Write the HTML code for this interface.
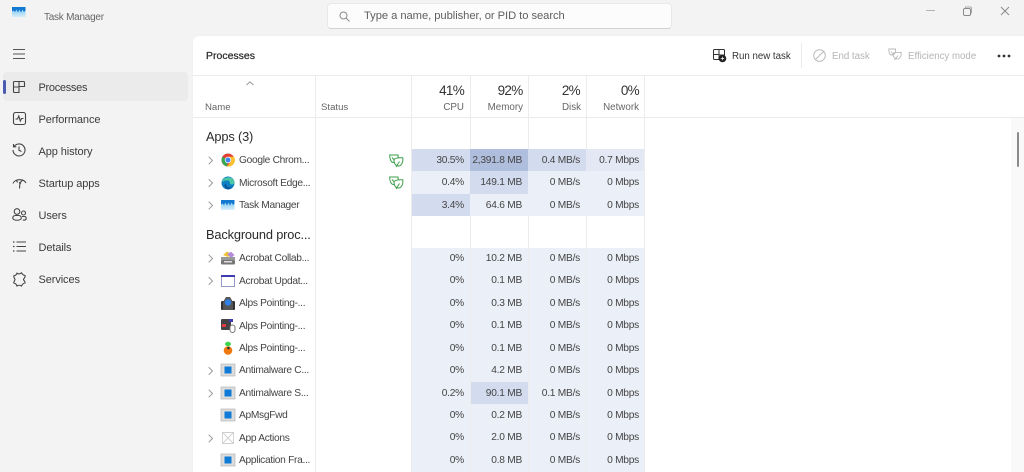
<!DOCTYPE html>
<html><head><meta charset="utf-8">
<style>
html,body{margin:0;padding:0;width:1024px;height:472px;overflow:hidden;background:#f3f3f3}
body{font-family:"Liberation Sans",sans-serif;position:relative;color:#333;filter:blur(.3px)}
.a{position:absolute;white-space:nowrap}
.nav{left:38.500px;font-size:11px;letter-spacing:-.1px;line-height:16px;color:#3c3c3c;margin-top:.5px}
.h{background:#ebebeb}
.n{left:239px;font-size:10.200px;letter-spacing:-.3px;line-height:14px;color:#444;margin-top:1px}
.g{left:206px;font-size:12.800px;letter-spacing:-.15px;line-height:16px;color:#2b2b2b;margin-top:.5px}
.c{position:absolute;height:22.400px;line-height:23.800px;font-size:10.200px;letter-spacing:-.25px;text-align:right;color:#444;box-sizing:border-box;padding-right:6px;white-space:nowrap}
.c1{left:412px;width:58px}.c2{left:470px;width:58px}.c3{left:528px;width:58px}.c4{left:586px;width:58px;padding-right:5px}
.l{background:#ebeff7}.m{background:#d3dbee}.d{background:#b0bedd}
.v{position:absolute;width:1px;top:76px;height:396px;background:#ececec}
svg{position:absolute;overflow:visible}
.i{fill:none;stroke:#444;stroke-width:1.100}
.t{font-size:13.500px;letter-spacing:-.7px;color:#333;text-align:right;line-height:18px;margin-top:.5px}
.s{font-size:9.800px;color:#666;text-align:right;line-height:14px}
.ch{fill:none;stroke:#999;stroke-width:1}
.tb{font-size:9.700px;line-height:15px;top:49px}
.hd{font-size:9.600px;line-height:14px;color:#666;top:101px}
</style></head><body>

<!-- title bar -->
<svg style="left:12px;top:7px" width="14" height="11"><defs><linearGradient id="tm" x1="0" y1="0" x2="0" y2="1"><stop offset="0" stop-color="#6cc0f0"/><stop offset="1" stop-color="#d8eefa"/></linearGradient></defs><rect width="13.500" height="10" fill="url(#tm)"/><path d="M0 0H13.500V3.500L12 5 10.500 2.500 9 5.500 7.500 2.500 6 5.500 4.500 2.500 3 5 1.500 3.500 0 4.500Z" fill="#1278d0"/></svg>
<div class="a" style="left:44px;top:10px;font-size:10px;letter-spacing:-.25px;line-height:14px;color:#666;margin-top:.5px">Task Manager</div>
<div class="a" style="left:327px;top:3px;width:345px;height:26px;box-sizing:border-box;background:#fcfcfc;border:1px solid #e8e8e8;border-bottom-color:#d2d2d2;border-radius:4px"></div>
<svg style="left:339px;top:11px" width="11" height="11"><circle cx="4.500" cy="4.500" r="3.500" fill="none" stroke="#8a8a8a" stroke-width="1"/><path d="M7 7L10.500 10.500" stroke="#8a8a8a" stroke-width="1"/></svg>
<div class="a" style="left:364px;top:9px;font-size:11.200px;letter-spacing:-.05px;line-height:15px;color:#5f5f5f">Type a name, publisher, or PID to search</div>
<svg style="left:926px;top:6px" width="90" height="12"><path d="M0 4.500H9" stroke="#b5b5b5"/><rect x="37.500" y="2.500" width="7" height="7" rx="1.500" fill="none" stroke="#8a8a8a"/><path d="M39.500 2V1H44.500Q45.500 1 45.500 2V7.500" fill="none" stroke="#aaa"/><path d="M75 1L83 9M83 1L75 9" stroke="#8a8a8a"/></svg>

<!-- sidebar -->
<svg style="left:13px;top:49px" width="12" height="10"><path d="M0 .5H12M0 5H12M0 9.500H12" stroke="#555" stroke-width="1.100"/></svg>
<div class="a h" style="left:3px;top:72px;width:185px;height:29px;border-radius:4px"></div>
<div class="a" style="left:3px;top:80px;width:3px;height:14px;background:#4a5bb0;border-radius:2px"></div>
<svg style="left:13px;top:81px" width="12" height="12"><path class="i" d="M1.500 .5H10.500Q11.500 .5 11.500 1.500V5.500H6V11.500H1.500Q.5 11.500 .5 10.500V1.500Q.5 .5 1.500 .5ZM.5 6H6M6 .5V6" /></svg>
<div class="a nav" style="top:79px;letter-spacing:-.3px">Processes</div>
<svg style="left:13px;top:112px" width="13" height="13"><rect class="i" x=".5" y=".5" width="12" height="12" rx="2"/><path class="i" d="M2.500 7H4.500L5.800 4 7.300 9 8.500 6.500H10.500"/></svg>
<div class="a nav" style="top:111px">Performance</div>
<svg style="left:12px;top:143px" width="14" height="14"><path class="i" d="M2.100 3.500A6 6 0 1 1 1 7M1.500 1V3.800H4.300M7 3.500V7.300L9.500 8.500"/></svg>
<div class="a nav" style="top:143px">App history</div>
<svg style="left:12px;top:177px" width="15" height="13"><path class="i" d="M1 6.500C2.500 2 11.500 1 14 6M7.500 11.500L8 5.500 10.500 3.500M7 5.500L9 6.500M4.500 3.500L5.500 5.500"/></svg>
<div class="a nav" style="top:175px">Startup apps</div>
<svg style="left:12px;top:208px" width="15" height="14"><circle class="i" cx="5" cy="3.500" r="2.800"/><circle class="i" cx="11.500" cy="5" r="2"/><path class="i" d="M.8 10C.8 8 2 7.500 3.500 7.500H6.500C8 7.500 9.300 8 9.300 10 9.300 13 .8 13 .8 10ZM10 8.500H12.500C13.500 8.500 14.200 9 14.200 10.500 14.200 12 12.500 12.300 10.800 12"/></svg>
<div class="a nav" style="top:207px">Users</div>
<svg style="left:13px;top:241px" width="13" height="11"><path d="M3.500 1H13M3.500 5.500H13M3.500 10H13" stroke="#444" stroke-width="1.100"/><path d="M0 1H1.500M0 5.500H1.500M0 10H1.500" stroke="#444" stroke-width="1.300"/></svg>
<div class="a nav" style="top:239px">Details</div>
<svg style="left:13px;top:272px" width="13" height="15"><path class="i" d="M4 1.200C6 2.800 8 1.200 8.500 .8 9 1.800 9.500 3 12 3.500 12.800 5.500 10.500 6.500 10.500 7.500 10.500 8.500 12.500 9.500 12 11 9.500 11.500 9 13 8.500 14 7 13 5.500 13 4 14 3.500 12 2.500 11.500 .8 11 .5 9.500 2 8.500 2 7.500 2 6.500 .3 5.500 .8 3.800 2.500 3.500 3.500 2.800 4 1.200Z"/></svg>
<div class="a nav" style="top:271px">Services</div>

<!-- main panel -->
<div class="a" style="left:193px;top:36px;width:831px;height:436px;background:#fff;border-top-left-radius:6px;box-shadow:0 0 1px #ddd"></div>
<div class="a" style="left:206px;top:49px;font-size:10.500px;line-height:15px;color:#2c2c2c;-webkit-text-stroke:.25px #2c2c2c">Processes</div>

<svg style="left:713px;top:49px" width="14" height="14"><path d="M1.500 .5H10.500Q11.500 .5 11.500 1.500V6H6V10.500H1.500Q.5 10.500 .5 9.500V1.500Q.5 .5 1.500 .5ZM.5 5.500H6M6 .5V6" fill="none" stroke="#333" stroke-width="1"/><circle cx="9.500" cy="9.500" r="3.800" fill="#222"/><path d="M7.800 9.500H11.200M9.500 7.800V11.200" stroke="#fff" stroke-width=".7"/></svg>
<div class="a tb" style="left:732px;color:#333">Run new task</div>
<div class="a" style="left:801px;top:43px;width:1px;height:25px;background:#ececec"></div>
<svg style="left:813px;top:49px" width="13" height="13"><circle cx="6.500" cy="6.500" r="5.800" fill="none" stroke="#bbb" stroke-width="1"/><path d="M2.500 10.500L10.500 2.500" stroke="#bbb"/></svg>
<div class="a tb" style="left:832px;color:#b5b5b5">End task</div>
<svg style="left:888px;top:48px" width="14" height="14"><path d="M.8 1H7.500C8 3 7 7 3.500 7 1.500 7 .8 4 .8 1ZM5 5.500C6 4.500 9 4 13.200 4.500 13.500 8 12 11 9 11 6.500 11 5 8.500 5 5.500ZM6.500 12L10 7.500M3 3.500L6 7" fill="none" stroke="#b8b8b8" stroke-width=".9"/></svg>
<div class="a tb" style="left:908px;color:#b5b5b5">Efficiency mode</div>
<svg style="left:997px;top:53.500px" width="14" height="4"><circle cx="2" cy="2" r="1.400" fill="#333"/><circle cx="7" cy="2" r="1.400" fill="#333"/><circle cx="12" cy="2" r="1.400" fill="#333"/></svg>

<div class="a" style="left:193px;top:75px;width:831px;height:1px;background:#ebebeb"></div>
<div class="a" style="left:193px;top:117px;width:831px;height:1px;background:#ebebeb"></div>
<div class="a" style="left:1011px;top:118px;width:13px;height:354px;background:#f9f9f9"></div>
<div class="a" style="left:1016.500px;top:132px;width:2.500px;height:35px;background:#8a8a8a;border-radius:2px"></div>

<svg style="left:246px;top:81px" width="8" height="5"><path d="M.5 4L4 .8 7.500 4" fill="none" stroke="#999"/></svg>
<div class="a hd" style="left:205px">Name</div>
<div class="a hd" style="left:321px">Status</div>
<div class="a t" style="left:412px;width:52px;top:81px">41%</div><div class="a s" style="left:412px;width:52px;top:101px">CPU</div>
<div class="a t" style="left:471px;width:51.500px;top:81px">92%</div><div class="a s" style="left:471px;width:52px;top:101px">Memory</div>
<div class="a t" style="left:529px;width:51px;top:81px">2%</div><div class="a s" style="left:529px;width:52px;top:101px">Disk</div>
<div class="a t" style="left:587px;width:52px;top:81px">0%</div><div class="a s" style="left:587px;width:52px;top:101px">Network</div>

<div class="a g" style="top:128px">Apps (3)</div>
<div class="a g" style="top:226px">Background proc...</div>

<!-- background fills -->
<div class="a l" style="left:412px;top:247.500px;width:232px;height:225px"></div>
<div class="a m" style="left:470px;top:382px;width:58px;height:22.400px"></div>

<div class="v" style="left:315px"></div><div class="v" style="left:411px"></div><div class="v" style="left:470px"></div><div class="v" style="left:528px"></div><div class="v" style="left:586px"></div><div class="v" style="left:644px"></div>

<!-- apps rows -->
<div class="c c1 m" style="top:149px">30.5%</div><div class="c c2 d" style="top:149px">2,391.8 MB</div><div class="c c3 m" style="top:149px">0.4 MB/s</div><div class="c c4 l" style="top:149px;background:#e3e8f4">0.7 Mbps</div>
<div class="c c1 l" style="top:171.400px">0.4%</div><div class="c c2 m" style="top:171.400px">149.1 MB</div><div class="c c3 l" style="top:171.400px">0 MB/s</div><div class="c c4 l" style="top:171.400px">0 Mbps</div>
<div class="c c1 m" style="top:193.800px">3.4%</div><div class="c c2 l" style="top:193.800px">64.6 MB</div><div class="c c3 l" style="top:193.800px">0 MB/s</div><div class="c c4 l" style="top:193.800px">0 Mbps</div>

<!-- background rows -->
<div class="c c1" style="top:247px">0%</div><div class="c c2" style="top:247px">10.2 MB</div><div class="c c3" style="top:247px">0 MB/s</div><div class="c c4" style="top:247px">0 Mbps</div>
<div class="c c1" style="top:269.400px">0%</div><div class="c c2" style="top:269.400px">0.1 MB</div><div class="c c3" style="top:269.400px">0 MB/s</div><div class="c c4" style="top:269.400px">0 Mbps</div>
<div class="c c1" style="top:292px">0%</div><div class="c c2" style="top:292px">0.3 MB</div><div class="c c3" style="top:292px">0 MB/s</div><div class="c c4" style="top:292px">0 Mbps</div>
<div class="c c1" style="top:314.400px">0%</div><div class="c c2" style="top:314.400px">0.1 MB</div><div class="c c3" style="top:314.400px">0 MB/s</div><div class="c c4" style="top:314.400px">0 Mbps</div>
<div class="c c1" style="top:336.800px">0%</div><div class="c c2" style="top:336.800px">0.1 MB</div><div class="c c3" style="top:336.800px">0 MB/s</div><div class="c c4" style="top:336.800px">0 Mbps</div>
<div class="c c1" style="top:359.200px">0%</div><div class="c c2" style="top:359.200px">4.2 MB</div><div class="c c3" style="top:359.200px">0 MB/s</div><div class="c c4" style="top:359.200px">0 Mbps</div>
<div class="c c1" style="top:381.600px">0.2%</div><div class="c c2" style="top:381.600px">90.1 MB</div><div class="c c3" style="top:381.600px">0.1 MB/s</div><div class="c c4" style="top:381.600px">0 Mbps</div>
<div class="c c1" style="top:404px">0%</div><div class="c c2" style="top:404px">0.2 MB</div><div class="c c3" style="top:404px">0 MB/s</div><div class="c c4" style="top:404px">0 Mbps</div>
<div class="c c1" style="top:426.400px">0%</div><div class="c c2" style="top:426.400px">2.0 MB</div><div class="c c3" style="top:426.400px">0 MB/s</div><div class="c c4" style="top:426.400px">0 Mbps</div>
<div class="c c1" style="top:449px">0%</div><div class="c c2" style="top:449px">0.8 MB</div><div class="c c3" style="top:449px">0 MB/s</div><div class="c c4" style="top:449px">0 Mbps</div>

<!-- chevrons -->
<svg style="left:208px;top:155.500px" width="6" height="320"><path class="ch" d="M.7 .7L4.500 4.500.7 8.300M.7 23.200L4.500 27 .7 30.800M.7 45.700L4.500 49.500 .7 53.300M.7 98.700L4.500 102.500 .7 106.300M.7 121.200L4.500 125 .7 128.800M.7 211.200L4.500 215 .7 218.800M.7 233.700L4.500 237.500 .7 241.300M.7 278.700L4.500 282.500 .7 286.300"/></svg>

<!-- process icons -->
<svg style="left:221px;top:153px" width="14" height="14" viewBox="0 0 14 14"><circle cx="7" cy="7" r="6.500" fill="#e53f34"/><path d="M7 7L1.400 3.800A6.500 6.500 0 0 0 6 13.400Z" fill="#34a853"/><path d="M7 3.700H13A6.500 6.500 0 0 1 6 13.400L9.800 8.800Z" fill="#fbc02d"/><circle cx="7" cy="7" r="3.200" fill="#fff"/><circle cx="7" cy="7" r="2.500" fill="#4285f4"/></svg>
<svg style="left:221px;top:176px" width="14" height="14" viewBox="0 0 14 14"><circle cx="7" cy="7" r="6.500" fill="#0f7fc4"/><path d="M.8 6C2 1 10 -.5 13 4.500 13.800 6.500 13.500 8.500 11 8.500 7.500 8.500 10 5 7 4.500 4 4 1.500 6 .8 6Z" fill="#4cc7a4"/><path d="M5 8C5 11 8.500 12.500 11.500 11 9 14 4.500 13.800 3.500 10 3.300 9 4 8 5 8Z" fill="#0b4f95"/></svg>
<svg style="left:221px;top:200px" width="14" height="11"><rect width="13.500" height="10" fill="url(#tm)"/><path d="M0 0H13.500V3.500L12 5 10.500 2.500 9 5.500 7.500 2.500 6 5.500 4.500 2.500 3 5 1.500 3.500 0 4.500Z" fill="#1278d0"/></svg>

<svg style="left:221px;top:251px" width="14" height="14"><path d="M2 4L6 .5 10 3 7 6Z" fill="#f2c230"/><path d="M6 3L10 .8 13.500 4 10 7Z" fill="#b48bd8"/><rect y="6" width="14" height="3" fill="#999"/><rect y="9" width="14" height="4.500" rx="1" fill="#777"/><rect x="3" y="10" width="8" height="1.500" fill="#ddd"/></svg>
<svg style="left:221px;top:274px" width="14" height="14"><rect x=".5" y="1.500" width="13" height="11" fill="#fff" stroke="#9a9ac8"/><rect y="1" width="14" height="2" fill="#3c3cb0"/></svg>
<svg style="left:221px;top:296px" width="14" height="14"><rect y="5" width="14" height="9" rx="1" fill="#333"/><path d="M5 1H9L12 6V14H2V6Z" fill="#555"/><circle cx="7" cy="6.500" r="3.200" fill="#2f80e8"/></svg>
<svg style="left:221px;top:318px" width="14" height="15"><rect y="1" width="10" height="11" rx="1" fill="#444"/><rect x="1" y="6" width="4" height="3" fill="#e23a45"/><rect x="8" y="1" width="4" height="3" fill="#3c3cb0"/><rect x="9" y="7" width="5" height="7.500" rx="2.400" fill="#fff" stroke="#777"/></svg>
<svg style="left:221px;top:341px" width="14" height="14"><ellipse cx="7" cy="3" rx="3" ry="2.200" fill="#3bd64a"/><circle cx="7" cy="9.500" r="4.300" fill="#f07810"/><circle cx="7.500" cy="7" r="1.300" fill="#333"/></svg>
<svg style="left:221px;top:363px" width="14" height="14"><rect y="1" width="14" height="12" fill="#ddd" stroke="#aaa" stroke-width=".6"/><rect x="3.500" y="3.500" width="7" height="7" fill="#0f7bd7"/></svg>
<svg style="left:221px;top:386px" width="14" height="14"><rect y="1" width="14" height="12" fill="#ddd" stroke="#aaa" stroke-width=".6"/><rect x="3.500" y="3.500" width="7" height="7" fill="#0f7bd7"/></svg>
<svg style="left:221px;top:408px" width="14" height="14"><rect y="1" width="14" height="12" fill="#ddd" stroke="#aaa" stroke-width=".6"/><rect x="3.500" y="3.500" width="7" height="7" fill="#0f7bd7"/></svg>
<svg style="left:221px;top:431px" width="14" height="14"><path d="M1.500 1.500H12.500V12.500H1.500ZM1.500 1.500L12.500 12.500M12.500 1.500L1.500 12.500" fill="#fff" stroke="#d0d0d0" stroke-width=".9"/></svg>
<svg style="left:221px;top:453px" width="14" height="14"><rect y="1" width="14" height="12" fill="#ddd" stroke="#aaa" stroke-width=".6"/><rect x="3.500" y="3.500" width="7" height="7" fill="#0f7bd7"/></svg>

<!-- names -->
<div class="a n" style="top:153px">Google Chrom...</div>
<div class="a n" style="top:175.500px">Microsoft Edge...</div>
<div class="a n" style="top:198px">Task Manager</div>
<div class="a n" style="top:251px">Acrobat Collab...</div>
<div class="a n" style="top:273.500px">Acrobat Updat...</div>
<div class="a n" style="top:296px">Alps Pointing-...</div>
<div class="a n" style="top:318.500px">Alps Pointing-...</div>
<div class="a n" style="top:341px">Alps Pointing-...</div>
<div class="a n" style="top:363px">Antimalware C...</div>
<div class="a n" style="top:386px">Antimalware S...</div>
<div class="a n" style="top:408px">ApMsgFwd</div>
<div class="a n" style="top:430.500px">App Actions</div>
<div class="a n" style="top:453px">Application Fra...</div>

<!-- leaf status -->
<svg style="left:389px;top:153.500px" width="15" height="14"><path d="M.7 1H9C9.800 4 8 8.500 4.500 8.500 2 8.500 .7 5 .7 1ZM3 3.500L6 7" fill="none" stroke="#3d9e4a" stroke-width="1"/><path d="M5 5.500C6.500 4 10 3.500 13.800 3.800 14.300 8 12.500 12 9.500 12 6.500 12 4.800 9 5 5.500Z" fill="#fff" stroke="#3d9e4a" stroke-width="1"/><path d="M7 13L10.500 7.500" fill="none" stroke="#3d9e4a" stroke-width="1"/></svg>
<svg style="left:389px;top:176px" width="15" height="14"><path d="M.7 1H9C9.800 4 8 8.500 4.500 8.500 2 8.500 .7 5 .7 1ZM3 3.500L6 7" fill="none" stroke="#3d9e4a" stroke-width="1"/><path d="M5 5.500C6.500 4 10 3.500 13.800 3.800 14.300 8 12.500 12 9.500 12 6.500 12 4.800 9 5 5.500Z" fill="#fff" stroke="#3d9e4a" stroke-width="1"/><path d="M7 13L10.500 7.500" fill="none" stroke="#3d9e4a" stroke-width="1"/></svg>
</body></html>
